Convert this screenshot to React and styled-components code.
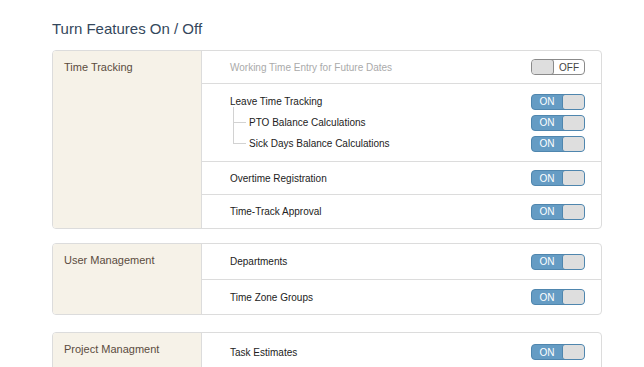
import { createGlobalStyle } from "styled-components";
import styled from "styled-components";

let Global = createGlobalStyle`
  body {
    margin: 0;
    background: #fff;
    font-family: "Liberation Sans", Arial, sans-serif;
  }
`

let Page = styled.div`
  padding: 20px 0 0 52px;
  width: 550px;
`

let Title = styled.h2`
  margin: 0 0 12px;
  font-size: 15px;
  font-weight: normal;
  line-height: 18px;
  color: #34475c;
`

let Card = styled.div`
  display: flex;
  border: 1px solid #dcdcdc;
  border-radius: 4px;
  overflow: hidden;
  margin-bottom: ${props => props.gap}px;
`

let Side = styled.div`
  width: 137px;
  flex: none;
  background: #f6f2e8;
  border-right: 1px solid #dcdcdc;
  padding: 10px 0 0 11px;
  font-size: 11px;
  line-height: 13px;
  color: #5b4c3e;
`

let Body = styled.div`
  flex: 1;
  display: flex;
  flex-direction: column;
`

let Row = styled.div`
  display: flex;
  align-items: center;
  justify-content: space-between;
  height: ${props => props.h || 32}px;
  padding: 0 16px 0 28px;
  border-bottom: 1px solid #dcdcdc;
  &:last-child { border-bottom: none; }
`

let Group = styled.div`
  padding: 7px 0 7px 0;
  border-bottom: 1px solid #dcdcdc;
`

let Line = styled.div`
  position: relative;
  display: flex;
  align-items: center;
  justify-content: space-between;
  height: 21px;
  padding: 0 16px 0 ${props => props.sub ? 47 : 28}px;
`

let Label = styled.span`
  font-size: 10px;
  color: ${props => props.off ? '#aaaaaa' : '#222'};
`

// thin tree connector for sub options
let Branch = styled.span`
  position: absolute;
  left: 31px;
  top: ${props => props.first ? -5 : -10}px;
  width: 12px;
  height: ${props => props.first ? 15 : 20}px;
  border-left: 1px solid #d2d2d2;
  border-bottom: 1px solid #d2d2d2;
`

let Switch = styled.div`
  display: flex;
  flex-direction: ${props => props.on ? 'row' : 'row-reverse'};
  align-items: stretch;
  width: 52px;
  height: 14px;
  border: 1px solid ${props => props.on ? '#4f86ae' : '#8a8a8a'};
  border-radius: 4px;
  background: ${props => props.on ? '#659cc4' : '#fff'};
  overflow: hidden;
`

let SwitchText = styled.span`
  flex: 1;
  display: flex;
  align-items: center;
  justify-content: center;
  font-size: 10px;
  color: ${props => props.on ? '#fff' : '#444'};
  padding-${props => props.on ? 'right' : 'left'}: 1px;
`

let Knob = styled.span`
  width: 21px;
  flex: none;
  background: #dedede;
  border: 1px solid ${props => props.on ? '#4f86ae' : '#8a8a8a'};
  border-radius: 3px;
  margin: -1px;
`

function Toggle({ on }) {
  return (
    <Switch on={on ? 1 : 0}>
      <SwitchText on={on ? 1 : 0}>{on ? 'ON' : 'OFF'}</SwitchText>
      <Knob on={on ? 1 : 0} />
    </Switch>
  )
}

export default function App() {
  return (
    <Page>
      <Global />
      <Title>Turn Features On / Off</Title>

      <Card gap={14}>
        <Side>Time Tracking</Side>
        <Body>
          <Row>
            <Label off>Working Time Entry for Future Dates</Label>
            <Toggle on={false} />
          </Row>
          <Group>
            <Line>
              <Label>Leave Time Tracking</Label>
              <Toggle on />
            </Line>
            <Line sub>
              <Branch first />
              <Label>PTO Balance Calculations</Label>
              <Toggle on />
            </Line>
            <Line sub>
              <Branch />
              <Label>Sick Days Balance Calculations</Label>
              <Toggle on />
            </Line>
          </Group>
          <Row>
            <Label>Overtime Registration</Label>
            <Toggle on />
          </Row>
          <Row h={33}>
            <Label>Time-Track Approval</Label>
            <Toggle on />
          </Row>
        </Body>
      </Card>

      <Card gap={17}>
        <Side>User Management</Side>
        <Body>
          <Row h={35}>
            <Label>Departments</Label>
            <Toggle on />
          </Row>
          <Row h={34}>
            <Label>Time Zone Groups</Label>
            <Toggle on />
          </Row>
        </Body>
      </Card>

      <Card gap={0}>
        <Side>Project Managment</Side>
        <Body>
          <Row h={38}>
            <Label>Task Estimates</Label>
            <Toggle on />
          </Row>
        </Body>
      </Card>
    </Page>
  )
}
